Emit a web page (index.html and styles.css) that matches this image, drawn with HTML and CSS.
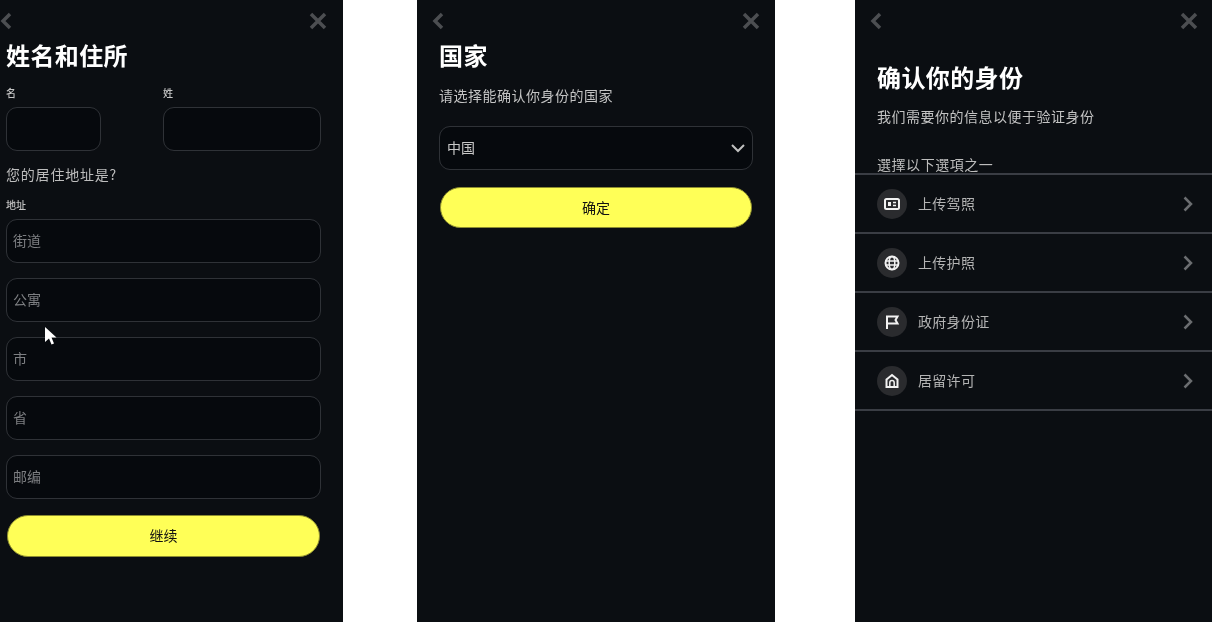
FILE: index.html
```html
<!DOCTYPE html>
<html lang="zh">

<head>
    <meta charset="UTF-8">
    <meta name="viewport" content="width=device-width, initial-scale=1.0">
    <link rel="stylesheet" href="styles.css">
    <title>身份验证</title>
</head>

<body>

    <!-- name and address -->
    <section class="panel panel-address">
        <div class="nav">
            <svg class="nav-icon" viewBox="0 0 12 18"><path d="M10 2 3 9l7 7"/></svg>
            <svg class="nav-icon" viewBox="0 0 18 18"><path d="M2 2l14 14M16 2 2 16"/></svg>
        </div>
        <div class="content">
            <h1>姓名和住所</h1>
            <div class="name-row">
                <div>
                    <label class="field-label" for="firstName">名</label>
                    <input class="field" type="text" id="firstName">
                </div>
                <div>
                    <label class="field-label" for="lastName">姓</label>
                    <input class="field" type="text" id="lastName">
                </div>
            </div>
            <p class="question">您的居住地址是?</p>
            <label class="field-label address-label" for="street">地址</label>
            <div class="address-fields">
                <input class="field" type="text" id="street" placeholder="街道">
                <input class="field" type="text" placeholder="公寓">
                <input class="field" type="text" placeholder="市">
                <input class="field" type="text" placeholder="省">
                <input class="field" type="text" placeholder="邮编">
            </div>
            <button class="primary-btn continue-btn">继续</button>
        </div>
        <svg class="cursor" viewBox="0 0 13 21">
            <path d="M1 1v15l4-3.500 2.500 6 2.500-1-2.500-6h5z"/>
        </svg>
    </section>

    <!-- country -->
    <section class="panel panel-country">
        <div class="nav">
            <svg class="nav-icon" viewBox="0 0 12 18"><path d="M10 2 3 9l7 7"/></svg>
            <svg class="nav-icon" viewBox="0 0 18 18"><path d="M2 2l14 14M16 2 2 16"/></svg>
        </div>
        <div class="content">
            <h1>国家</h1>
            <p class="subtitle">请选择能确认你身份的国家</p>
            <div class="select-box">
                <span class="select-value">中国</span>
                <svg class="select-arrow" viewBox="0 0 16 10"><path d="M2 2l6 6 6-6"/></svg>
            </div>
            <button class="primary-btn confirm-btn">确定</button>
        </div>
    </section>

    <!-- id type -->
    <section class="panel panel-identity">
        <div class="nav">
            <svg class="nav-icon" viewBox="0 0 12 18"><path d="M10 2 3 9l7 7"/></svg>
            <svg class="nav-icon" viewBox="0 0 18 18"><path d="M2 2l14 14M16 2 2 16"/></svg>
        </div>
        <div class="content">
            <h1>确认你的身份</h1>
            <p class="subtitle">我们需要你的信息以便于验证身份</p>
            <p class="choose">選擇以下選項之一</p>
        </div>
        <ul class="id-list">
            <li class="id-row">
                <span class="id-icon">
                    <svg viewBox="0 0 16 16">
                        <rect x="1" y="3" width="14" height="10" rx="1.500"/>
                        <path class="fill" d="M4 6h3v4H4z"/>
                        <path class="thin" d="M9 6.500h3M9 9.500h3"/>
                    </svg>
                </span>
                <span class="id-name">上传驾照</span>
                <svg class="id-arrow" viewBox="0 0 10 16"><path d="M1.500 1.500 8 8l-6.500 6.500"/></svg>
            </li>
            <li class="id-row">
                <span class="id-icon">
                    <svg viewBox="0 0 16 16">
                        <circle cx="8" cy="8" r="6.500"/>
                        <ellipse class="thin" cx="8" cy="8" rx="2.800" ry="6.500"/>
                        <path class="thin" d="M1.500 6h13M1.500 10h13"/>
                    </svg>
                </span>
                <span class="id-name">上传护照</span>
                <svg class="id-arrow" viewBox="0 0 10 16"><path d="M1.500 1.500 8 8l-6.500 6.500"/></svg>
            </li>
            <li class="id-row">
                <span class="id-icon">
                    <svg viewBox="0 0 16 16">
                        <path d="M3 15V2.500h10.500l-2 3.500 2 3.500H3"/>
                    </svg>
                </span>
                <span class="id-name">政府身份证</span>
                <svg class="id-arrow" viewBox="0 0 10 16"><path d="M1.500 1.500 8 8l-6.500 6.500"/></svg>
            </li>
            <li class="id-row">
                <span class="id-icon">
                    <svg viewBox="0 0 16 16">
                        <path d="M2.500 6.500 8 2l5.500 4.500V14h-11z"/>
                        <path class="thin" d="M5.800 14V9.800a2.200 2.200 0 0 1 4.400 0V14"/>
                    </svg>
                </span>
                <span class="id-name">居留许可</span>
                <svg class="id-arrow" viewBox="0 0 10 16"><path d="M1.500 1.500 8 8l-6.500 6.500"/></svg>
            </li>
        </ul>
    </section>

</body>

</html>
```

FILE: styles.css
```css
body {
    font-family: 'Noto Sans CJK SC', 'Noto Sans', sans-serif;
    background-color: #fff;
    margin: 0;
    height: 622px;
    overflow: hidden;
    display: flex;
}

.panel {
    position: relative;
    flex-shrink: 0;
    height: 622px;
    background-color: #0b0e12;
    color: #d6d6d6;
    filter: blur(0.4px);
}

.panel-address {
    width: 343px;
    margin-right: 74px;
}

.panel-country {
    width: 358px;
    margin-right: 80px;
}

.panel-identity {
    width: 357px;
}

.nav {
    height: 42px;
    padding: 0 15px;
    display: flex;
    justify-content: space-between;
    align-items: center;
}

.panel-address .nav {
    padding: 0 16px 0 0;
}

.panel-identity .nav {
    padding-right: 14px;
}

.nav-icon {
    height: 18px;
    fill: none;
    stroke: #4c4e51;
    stroke-width: 3.500;
}

.content {
    padding: 0 22px;
}

.panel-address .content {
    padding-left: 6px;
}

h1 {
    margin: 0;
    font-size: 24px;
    line-height: 26px;
    font-weight: 700;
    letter-spacing: 0.4px;
    color: #fff;
}

.panel-identity h1 {
    margin-top: 22px;
}

.name-row {
    display: grid;
    grid-template-columns: 95px 1fr;
    column-gap: 62px;
    margin-top: 18px;
}

.field-label {
    display: block;
    font-size: 10px;
    line-height: 14px;
    font-weight: 500;
    color: #c4c4c4;
    margin-bottom: 7px;
}

.field {
    display: block;
    width: 100%;
    height: 44px;
    box-sizing: border-box;
    padding: 0 6px 2px;
    background-color: #06090d;
    border: 1px solid #2f3237;
    border-radius: 11px;
    outline: none;
    font-family: inherit;
    font-size: 14px;
    color: #d6d6d6;
}

.field::placeholder {
    color: #7d7f82;
    opacity: 1;
}

.question {
    margin: 14px 0 0;
    font-size: 14px;
    line-height: 18px;
    letter-spacing: 0.8px;
    color: #bdbdbd;
}

.address-label {
    margin-top: 15px;
}

.address-fields {
    display: flex;
    flex-direction: column;
    gap: 15px;
}

.primary-btn {
    display: block;
    width: calc(100% - 2px);
    margin-left: 1px;
    background-color: #ffff57;
    border: 1px solid #8d8d2f;
    border-radius: 21px;
    font-family: inherit;
    font-size: 14px;
    color: #111;
    padding: 0 0 2px;
}

.continue-btn {
    height: 42px;
    margin-top: 16px;
}

.confirm-btn {
    height: 41px;
    margin-top: 17px;
}

.subtitle {
    margin: 18px 0 0;
    font-size: 14px;
    line-height: 18px;
    letter-spacing: 0.5px;
    color: #c4c4c4;
}

.panel-identity .subtitle {
    margin-top: 17px;
}

.select-box {
    height: 44px;
    box-sizing: border-box;
    margin-top: 22px;
    padding: 0 6px 0 7px;
    background-color: #06090d;
    border: 1px solid #2f3237;
    border-radius: 11px;
    display: flex;
    justify-content: space-between;
    align-items: center;
    font-size: 14px;
    color: #c8c8c8;
}

.select-value {
    margin-bottom: 2px;
}

.select-arrow {
    width: 16px;
    fill: none;
    stroke: #c0c0c0;
    stroke-width: 2;
}

.choose {
    margin: 30px 0 0;
    font-size: 14px;
    line-height: 18px;
    letter-spacing: 0.55px;
    color: #bdbdbd;
}

.id-list {
    list-style: none;
    margin: 0;
    padding: 0;
    border-top: 2px solid #3a3d44;
}

.id-row {
    height: 59px;
    box-sizing: border-box;
    padding: 0 19px 0 22px;
    border-bottom: 2px solid #3a3d44;
    display: flex;
    align-items: center;
}

.id-icon {
    width: 30px;
    height: 30px;
    border-radius: 50%;
    background-color: #2a2b2e;
    display: flex;
    justify-content: center;
    align-items: center;
}

.id-icon svg {
    width: 16px;
    height: 16px;
    fill: none;
    stroke: #f2f2f2;
    stroke-width: 2;
}

.id-icon .thin {
    stroke-width: 1.500;
}

.id-icon .fill {
    fill: #f2f2f2;
    stroke: none;
}

.id-name {
    flex: 1;
    margin: 0 0 2px 11px;
    font-size: 14px;
    letter-spacing: 0.3px;
    color: #b4b4b4;
}

.id-arrow {
    width: 10px;
    height: 16px;
    fill: none;
    stroke: #6b6d70;
    stroke-width: 2.500;
}

.cursor {
    position: absolute;
    left: 44px;
    top: 326px;
    width: 13px;
    height: 21px;
    fill: #fff;
}
```
